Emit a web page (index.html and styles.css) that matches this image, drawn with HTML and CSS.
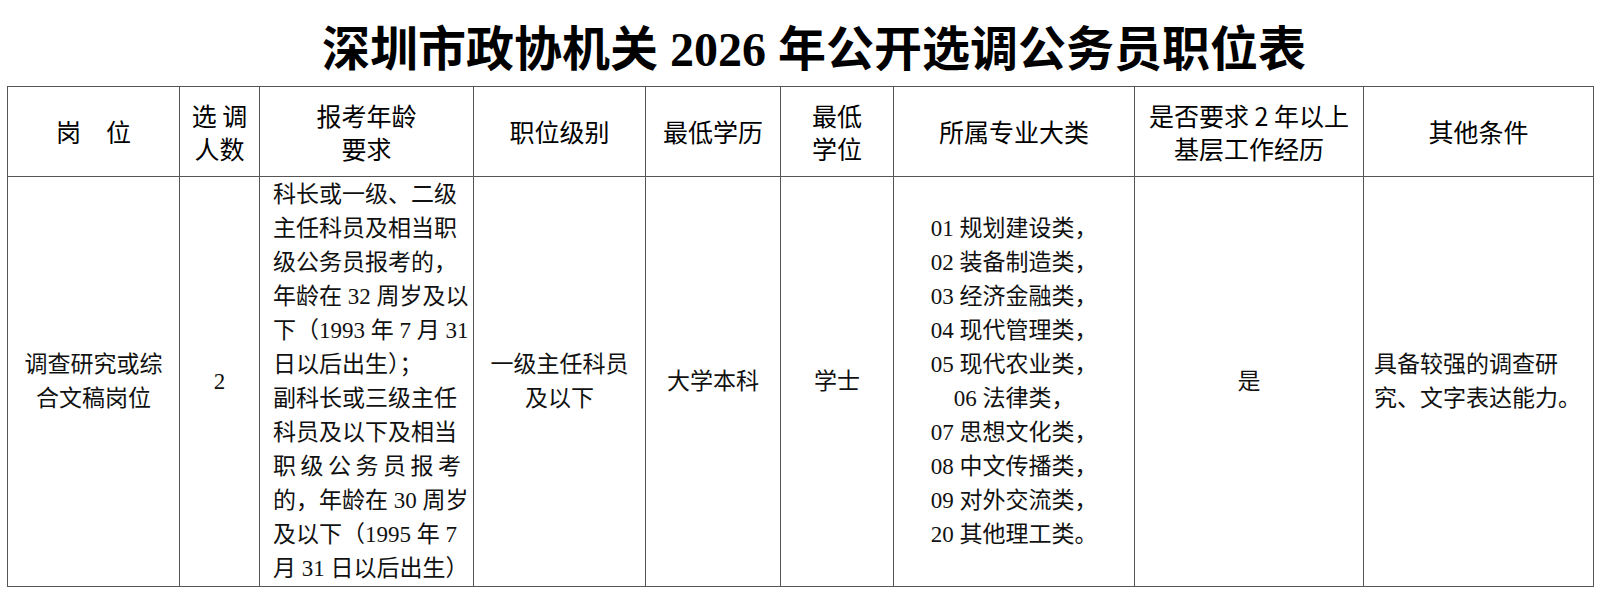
FILE: index.html
```html
<!DOCTYPE html>
<html lang="zh-CN">
<head>
<meta charset="utf-8">
<title>深圳市政协机关 2026 年公开选调公务员职位表</title>
<link rel="stylesheet" href="styles.css">
</head>
<body>
<h1 class="title">深圳市政协机关 2026 年公开选调公务员职位表</h1>
<table class="jobs">
  <colgroup>
    <col class="c1"><col class="c2"><col class="c3"><col class="c4"><col class="c5"><col class="c6"><col class="c7"><col class="c8"><col class="c9">
  </colgroup>
  <thead>
    <tr>
      <th>岗　位</th>
      <th>选 调<br>人数</th>
      <th>报考年龄<br>要求</th>
      <th>职位级别</th>
      <th>最低学历</th>
      <th>最低<br>学位</th>
      <th>所属专业大类</th>
      <th>是否要求 2 年以上<br>基层工作经历</th>
      <th>其他条件</th>
    </tr>
  </thead>
  <tbody>
    <tr>
      <td>调查研究或综<br>合文稿岗位</td>
      <td>2</td>
      <td class="age">
        <div class="ln">科长或一级、二级</div>
        <div class="ln">主任科员及相当职</div>
        <div class="ln">级公务员报考的，</div>
        <div class="ln">年龄在 32 周岁及以</div>
        <div class="ln">下（1993 年 7 月 31</div>
        <div class="ln">日以后出生）；</div>
        <div class="ln">副科长或三级主任</div>
        <div class="ln">科员及以下及相当</div>
        <div class="ln jst">职级公务员报考</div>
        <div class="ln">的，年龄在 30 周岁</div>
        <div class="ln">及以下（1995 年 7</div>
        <div class="ln">月 31 日以后出生）</div>
      </td>
      <td>一级主任科员<br>及以下</td>
      <td>大学本科</td>
      <td>学士</td>
      <td>01 规划建设类，<br>02 装备制造类，<br>03 经济金融类，<br>04 现代管理类，<br>05 现代农业类，<br>06 法律类，<br>07 思想文化类，<br>08 中文传播类，<br>09 对外交流类，<br>20 其他理工类。</td>
      <td>是</td>
      <td class="other">具备较强的调查研<br>究、文字表达能力。</td>
    </tr>
  </tbody>
</table>
</body>
</html>
```
FILE: styles.css
```css
html, body {
  margin: 0;
  padding: 0;
  background: #ffffff;
  color: #000000;
}

.title {
  margin: 0;
  height: 86px;
  box-sizing: border-box;
  padding: 14px 0 0 28px;
  line-height: 72px;
  font-size: 48px;
  font-weight: 700;
  text-align: center;
  white-space: nowrap;
  font-family: "Liberation Serif", "Noto Sans CJK SC", serif;
}

.jobs {
  border-collapse: collapse;
  table-layout: fixed;
  width: 1586px;
  margin-left: 7px;
}

.c1 { width: 172px; }
.c2 { width: 80px; }
.c3 { width: 214px; }
.c4 { width: 172px; }
.c5 { width: 135px; }
.c6 { width: 113px; }
.c7 { width: 241px; }
.c8 { width: 229px; }
.c9 { width: 230px; }

.jobs th,
.jobs td {
  border: 1px solid #555555;
  padding: 0;
  text-align: center;
  vertical-align: middle;
}

.jobs th {
  height: 89px;
  font-family: "Noto Sans CJK SC", sans-serif;
  font-weight: 400;
  font-size: 25px;
  line-height: 33px;
}

.jobs td {
  height: 409px;
  font-family: "Liberation Serif", "Noto Sans CJK SC", serif;
  font-weight: 400;
  font-size: 23px;
  line-height: 34px;
  color: #111111;
}

.jobs td.age {
  text-align: left;
  padding: 0 12px 0 13px;
}

.ln {
  white-space: nowrap;
}

.ln.jst {
  text-align: justify;
  text-align-last: justify;
}

.jobs td.other {
  text-align: left;
  padding-left: 10px;
}
```
